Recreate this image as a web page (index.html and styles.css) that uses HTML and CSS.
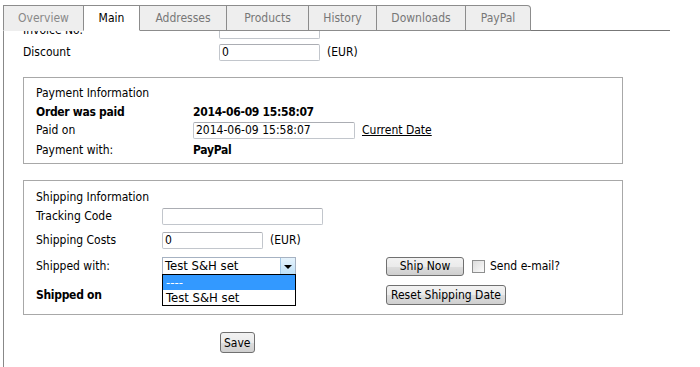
FILE: index.html
```html
<!DOCTYPE html>
<html>
<head>
<meta charset="utf-8">
<link rel="stylesheet" href="styles.css">
</head>
<body>
<ul class="tabs">
  <li class="tab first">Overview</li>
  <li class="tab active">Main</li>
  <li class="tab">Addresses</li>
  <li class="tab">Products</li>
  <li class="tab">History</li>
  <li class="tab">Downloads</li>
  <li class="tab last">PayPal</li>
</ul>
<div class="pane">
  <div class="scroll">
    <div class="toprows">
      <div class="row"><span class="lbl">Invoice No.</span><span class="input w100"></span><span></span></div>
      <div class="row"><span class="lbl">Discount</span><span class="input w100">0</span><span class="unit">(EUR)</span></div>
    </div>

    <div class="box payment">
      <div class="title">Payment Information</div>
      <div class="prow r1"><span class="b">Order was paid</span><span class="b">2014-06-09 15:58:07</span></div>
      <div class="prow r2"><span>Paid on</span><span class="cell"><span class="input w161">2014-06-09 15:58:07</span><a class="link">Current Date</a></span></div>
      <div class="prow r3"><span>Payment with:</span><span class="b">PayPal</span></div>
    </div>

    <div class="box shipping">
      <div class="title">Shipping Information</div>
      <div class="srow s1"><span>Tracking Code</span><span class="cell"><span class="input w160"></span></span><span></span></div>
      <div class="srow s2"><span>Shipping Costs</span><span class="cell"><span class="input w100">0</span><span class="unit">(EUR)</span></span><span></span></div>
      <div class="srow s3"><span>Shipped with:</span>
        <span class="cell">
          <span class="select">
            <span class="seltext">Test S&amp;H set</span>
            <span class="arrow"><span class="tri"></span></span>
            <span class="dropdown">
              <span class="opt sel">----</span>
              <span class="opt">Test S&amp;H set</span>
            </span>
          </span>
        </span>
        <span class="cell"><button class="btn ship">Ship Now</button><span class="check"></span><span class="chklbl">Send e-mail?</span></span>
      </div>
      <div class="srow s4"><span class="b">Shipped on</span><span class="cell"></span><span class="cell"><button class="btn reset">Reset Shipping Date</button></span></div>
    </div>

    <div class="saverow"><button class="btn save">Save</button></div>
  </div>
</div>
</body>
</html>
```
FILE: styles.css
```css
html, body {
  margin: 0;
  padding: 0;
  background: #fff;
}
body {
  font-family: "DejaVu Sans Condensed", "DejaVu Sans", sans-serif;
  font-stretch: condensed;
  font-size: 12px;
  color: #000;
  width: 700px;
  height: 367px;
  overflow: hidden;
}
.tabs {
  list-style: none;
  margin: 5px 0 0 3px;
  padding: 0;
  display: flex;
  position: relative;
  z-index: 2;
}
.tab {
  height: 24px;
  line-height: 24px;
  border: 1px solid #8c8c8c;
  border-left: none;
  background: #eeeeee;
  color: #777;
  text-align: center;
  font-size: 12px;
  margin-bottom: -1px;
}
.tab.first { border-left: 1px solid #8c8c8c; width: 79px; border-bottom-color: #eeeeee; color: #888; }
.tab.active { background: #fff; color: #000; width: 55px; border-bottom-color: #fff; }
.tab:nth-child(3) { width: 86px; }
.tab:nth-child(4) { width: 81px; }
.tab:nth-child(5) { width: 67px; }
.tab:nth-child(6) { width: 88px; }
.tab.last { width: 64px; border-top-right-radius: 4px; }

.pane {
  margin-left: 3px;
  width: 666px;
  height: 337px;
  border-top: 1px solid #777;
  border-left: 1px solid #888;
  overflow: hidden;
  position: relative;
}
.scroll {
  margin-top: -12px;
  padding-left: 19px;
}
.row {
  display: grid;
  grid-template-columns: 196px auto 1fr;
  align-items: center;
  height: 22px;
}
.input {
  display: inline-block;
  box-sizing: border-box;
  height: 17px;
  line-height: 15px;
  border: 1px solid #c2c6cc;
  border-top-color: #abadb3;
  border-radius: 2px;
  padding-left: 2px;
  background: #fff;
  vertical-align: middle;
}
.w100 { width: 101px; }
.w160 { width: 161px; }
.w161 { width: 162px; }
.unit { margin-left: 7px; }

.box {
  box-sizing: border-box;
  width: 600px;
  border: 1px solid #a8a8a8;
  padding-left: 12px;
}
.payment {
  margin-top: 14px;
  padding-top: 6px;
  padding-bottom: 2px;
}
.title { height: 18px; line-height: 18px; }
.b { font-weight: bold; letter-spacing: -0.3px; }
.prow {
  display: grid;
  grid-template-columns: 157px 1fr;
  align-items: center;
}
.r1 { height: 19px; }
.r2 { height: 18px; }
.r3 { height: 22px; }
.cell { display: flex; align-items: center; }
.link {
  margin-left: 7px;
  text-decoration: underline;
  color: #000;
}

.shipping {
  margin-top: 16px;
  padding-top: 7px;
  padding-bottom: 2px;
}
.srow {
  display: grid;
  grid-template-columns: 126px 224px 1fr;
  align-items: center;
}
.s1 { height: 20px; }
.s2 { height: 28px; }
.s3 { height: 24px; }
.s4 { height: 34px; }

.select {
  position: relative;
  display: flex;
  box-sizing: border-box;
  width: 134px;
  height: 18px;
  border: 1px solid #a6b2c2;
  background: #fff;
}
.seltext {
  flex: 1;
  line-height: 16px;
  padding-left: 2px;
  font-size: 13px;
}
.arrow {
  width: 14px;
  height: 16px;
  background: linear-gradient(#e6f3fc, #bfe1f8);
  border-left: 1px solid #9fc6e6;
  display: flex;
  align-items: center;
  justify-content: center;
}
.tri {
  width: 0;
  height: 0;
  border-left: 4px solid transparent;
  border-right: 4px solid transparent;
  border-top: 4px solid #000;
  margin-top: 1px;
}
.dropdown {
  position: absolute;
  left: -1px;
  top: 16px;
  width: 134px;
  box-sizing: border-box;
  border: 1px solid #000;
  background: #fff;
  z-index: 3;
}
.opt {
  display: block;
  height: 15px;
  line-height: 15px;
  padding-left: 3px;
  font-size: 13px;
}
.opt.sel { background: #3399ff; color: #fff; }

.btn {
  font-family: inherit;
  font-stretch: condensed;
  font-size: 12px;
  color: #000;
  border: 1px solid #707070;
  border-radius: 3px;
  background: linear-gradient(#f2f2f2 0%, #ebebeb 50%, #dddddd 51%, #cfcfcf 100%);
  padding: 0 6px;
  margin: 0;
  cursor: default;
}
.ship { width: 78px; height: 19px; }
.reset { height: 20px; padding: 0 4px; }
.check {
  display: inline-block;
  box-sizing: border-box;
  width: 13px;
  height: 13px;
  border: 1px solid #8e8f8f;
  background: linear-gradient(135deg, #dcdcdc, #fbfbfb);
  margin-left: 8px;
}
.chklbl { margin-left: 5px; }

.saverow {
  padding-left: 197px;
  margin-top: 17px;
}
.save { height: 21px; padding: 0 3px; }
```
